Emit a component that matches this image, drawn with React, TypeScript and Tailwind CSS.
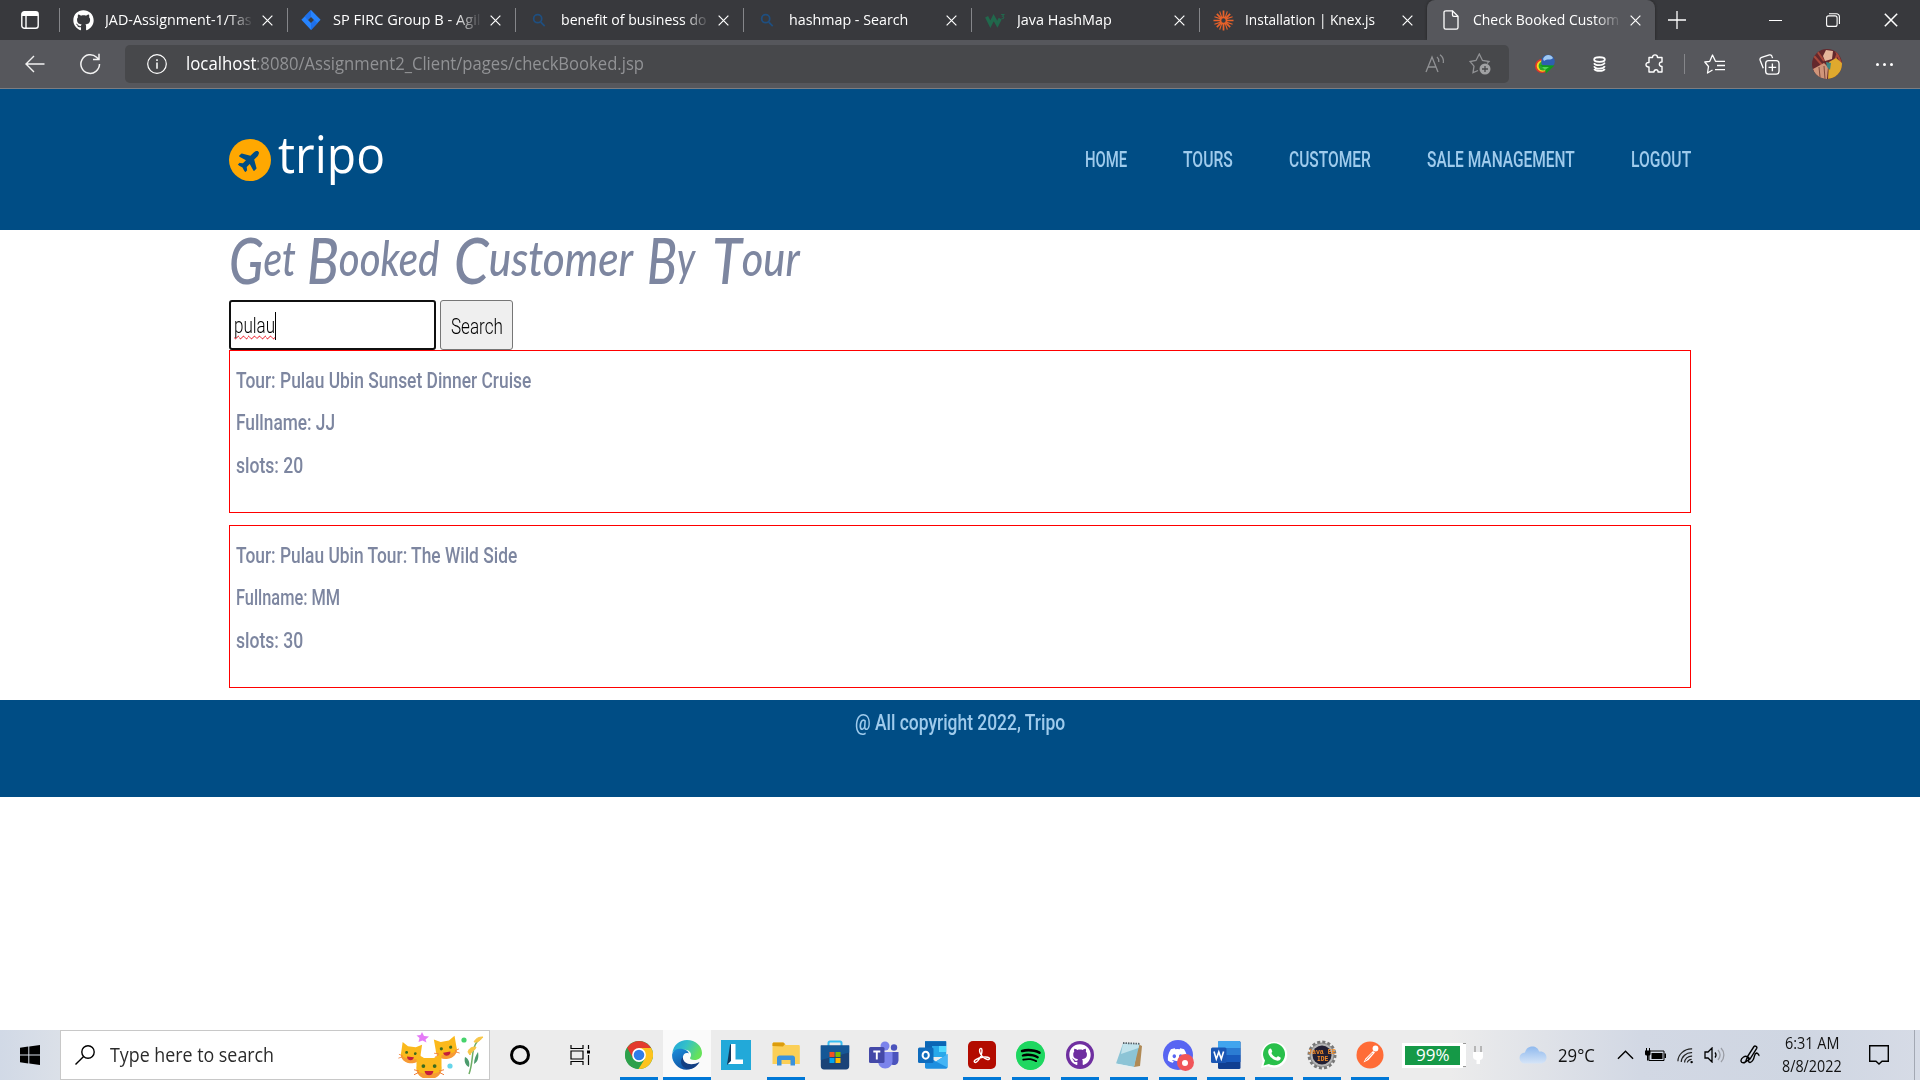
import React, { useLayoutEffect, useRef, useState } from "react";
import { FaGithub, FaSpotify, FaDiscord, FaWhatsapp, FaPlane } from "react-icons/fa";

/** Text squeezed or stretched horizontally to an exact width. */
function Fit({
  w,
  className = "",
  textClassName = "",
  children,
}: {
  w: number;
  className?: string;
  textClassName?: string;
  children: React.ReactNode;
}) {
  const ref = useRef<HTMLSpanElement>(null);
  const [scale, setScale] = useState(1);
  useLayoutEffect(() => {
    if (ref.current) setScale(w / ref.current.offsetWidth);
  }, [w]);
  return (
    <span className={"inline-block shrink-0 " + className} style={{ width: w }}>
      <span
        ref={ref}
        className={"inline-block origin-left whitespace-nowrap " + textClassName}
        style={{ transform: `scaleX(${scale})` }}
      >
        {children}
      </span>
    </span>
  );
}

function CloseIcon({ className = "size-[11px]" }: { className?: string }) {
  return (
    <svg viewBox="0 0 12 12" className={className} fill="none" stroke="currentColor" strokeWidth="1.3">
      <path d="M.7.7l10.6 10.6M11.3.7L.7 11.3" />
    </svg>
  );
}

const SearchFavicon = () => (
  <svg viewBox="0 0 16 16" className="size-[14px]" fill="none" stroke="#1f4f80" strokeWidth="2">
    <circle cx="6.5" cy="6.5" r="4.6" />
    <path d="M10 10.5l4.5 4.5" />
  </svg>
);

const tabs = [
  { title: "JAD-Assignment-1/Tas", w: 147, fade: true, icon: <FaGithub className="size-[21px] text-white" /> },
  {
    title: "SP FIRC Group B - Agil",
    w: 148,
    fade: true,
    icon: (
      <svg viewBox="0 0 20 20" className="size-5">
        <path d="M10 0l9.6 9.8L10 20 .4 9.8z" fill="#2684ff" />
        <path d="M10 0v6.6L6.8 9.9 3.6 6.6zM10 20v-6.7l3.2-3.3 3.2 3.3z" fill="#1f70ea" />
        <path d="M10 7l3 3-3 3-3-3z" fill="#3a3b3f" />
      </svg>
    ),
  },
  { title: "benefit of business do", w: 146, fade: true, icon: <SearchFavicon /> },
  { title: "hashmap - Search", w: 119, icon: <SearchFavicon /> },
  {
    title: "Java HashMap",
    w: 95,
    icon: (
      <svg viewBox="0 0 22 16" className="h-[15px] w-[21px]" fill="none" stroke="#21684c">
        <path d="M1.5 4l4 8 3.500-7 4 7 3-6" strokeWidth="3.6" />
        <path d="M17 1.5h3l-1.500 2c2 0 2 3-1 2.500" strokeWidth="1.1" />
      </svg>
    ),
  },
  {
    title: "Installation | Knex.js",
    w: 130,
    icon: (
      <svg viewBox="0 0 22 22" className="size-[21px]" fill="none" stroke="#e8622a" strokeWidth="1.800">
        <circle cx="11" cy="11" r="3.200" />
        <path d="M11 .5v7M11 14.500v7M.5 11h7M14.500 11h7M4 4l4.500 4.500M13.500 13.500L18 18M18 4l-4.500 4.500M8.500 13.500L4 18" />
        <path d="M7 1.500l2 6M13 14.500l2 6M15 1.500l-2 6M9 14.500l-2 6M1.500 7l6 2M14.500 13l6 2M20.500 7l-6 2M7.500 13l-6 2" strokeWidth="1.200" />
      </svg>
    ),
  },
  {
    title: "Check Booked Custom",
    w: 146,
    fade: true,
    icon: (
      <svg viewBox="0 0 16 20" className="h-5 w-4" fill="none" stroke="#fff" strokeWidth="1.3">
        <path d="M2.500.8h7L15 6.300v11.200a1.700 1.700 0 0 1-1.700 1.700H2.700A1.700 1.700 0 0 1 1 17.500V2.500A1.700 1.700 0 0 1 2.700.8z" />
        <path d="M9.500.8v4.200c0 .8.500 1.300 1.300 1.300H15" />
      </svg>
    ),
  },
];

function TabBar() {
  return (
    <div className="flex h-10 bg-[#38393d] text-white">
      <div className="flex w-[59px] shrink-0 items-center justify-center">
        <svg viewBox="0 0 18 18" className="size-[18px]" fill="none" stroke="#fff" strokeWidth="1.400">
          <rect x=".8" y=".8" width="16.400" height="16.400" rx="2.500" />
          <path d="M1 3h16" strokeWidth="4" />
          <path d="M5 4v13" />
        </svg>
      </div>
      {tabs.map((t, i) => {
        const active = i === 6;
        return (
          <div
            key={t.title}
            className={
              active
                ? "flex h-10 w-[228px] shrink-0 items-center rounded-t-lg bg-[#56575c] shadow-[0_0_3px_#222]"
                : "flex h-10 w-[228px] shrink-0 items-center"
            }
          >
            <span className={active ? "h-6 w-px" : "h-6 w-px bg-[#85868a]"} />
            <span className="ml-[11px] flex w-6 shrink-0 justify-center">{t.icon}</span>
            <span
              className={
                t.fade
                  ? "ml-[10px] flex w-[149px] shrink-0 overflow-hidden pb-[2px] text-[15px] leading-6 [mask-image:linear-gradient(to_right,black_82%,transparent)]"
                  : "ml-[10px] flex w-[149px] shrink-0 overflow-hidden pb-[2px] text-[15px] leading-6"
              }
            >
              <Fit w={t.w}>{t.title}</Fit>
            </span>
            <span className="ml-[8px] flex w-[11px] shrink-0 justify-center">
              <CloseIcon />
            </span>
          </div>
        );
      })}
      <div className="flex w-11 items-center justify-center">
        <svg viewBox="0 0 18 18" className="size-[18px]" stroke="#fff" strokeWidth="1.300">
          <path d="M9 0v18M0 9h18" />
        </svg>
      </div>
      <div className="ml-auto flex">
        <span className="flex w-[57px] items-center justify-center">
          <span className="h-px w-[13px] bg-white" />
        </span>
        <span className="flex w-[58px] items-center justify-center">
          <svg viewBox="0 0 14 14" className="size-[14px]" fill="none" stroke="#fff" strokeWidth="1.100">
            <rect x=".6" y="2.900" width="10.500" height="10.500" rx="2" />
            <path d="M3 .7h7.500a2.900 2.900 0 0 1 2.900 2.900V11" />
          </svg>
        </span>
        <span className="flex w-[58px] items-center justify-center">
          <CloseIcon className="size-[14px]" />
        </span>
      </div>
    </div>
  );
}

function Toolbar() {
  return (
    <div className="flex h-[49px] border-b border-[#7c7d81] bg-[#56575c] pt-[5px] text-white">
      <div className="flex h-[38px] w-[69px] shrink-0 items-center justify-center">
        <svg viewBox="0 0 20 18" className="h-[18px] w-5" fill="none" stroke="#f2f2f2" strokeWidth="1.400">
          <path d="M19.500 9H1M9 1L1 9l8 8" />
        </svg>
      </div>
      <div className="flex h-[38px] w-[56px] shrink-0 items-center pl-[10px]">
        <svg viewBox="0 0 22 22" className="size-[22px]" fill="none" stroke="#f2f2f2" strokeWidth="1.500">
          <path d="M20.500 11A9.300 9.300 0 1 1 17.600 4.300l2 2M20 .8v5.700h-6" />
        </svg>
      </div>
      <div className="flex h-[38px] w-[1384px] shrink-0 items-center rounded-[5px] bg-[#47484b] pl-[22px]">
        <svg viewBox="0 0 20 20" className="size-5" fill="none" stroke="#fff" strokeWidth="1.200">
          <circle cx="10" cy="10" r="9.300" />
          <path d="M10 8.500v6.300M10 5.200v1.700" strokeWidth="1.500" />
        </svg>
        <span className="ml-[19px] flex pb-[2px] text-[18px] leading-6">
          <Fit w={70}>localhost</Fit>
          <Fit w={388} className="text-[#919295]">
            :8080/Assignment2_Client/pages/checkBooked.jsp
          </Fit>
        </span>
        <svg viewBox="0 0 20 20" className="ml-auto size-5" fill="none" stroke="#919295" strokeWidth="1.300">
          <path d="M1 18L7 3l6 15M3 13h8M12 3c1.500 1.200 2 3 1.800 5M15 .8c2.800 2 3.800 5 3.300 8.200" />
        </svg>
        <svg viewBox="0 0 22 22" className="mr-[18px] ml-[24px] size-[22px]" fill="none" stroke="#919295" strokeWidth="1.300">
          <path d="M9 17.500l-5 2.200 1-6.500L1 8.500l6-1L10.300 1l3.200 6.500 6.500 1-2 2" />
          <circle cx="16" cy="16" r="5.500" fill="#a0a1a3" stroke="none" />
          <path d="M16 13v6M13 16h6" stroke="#47484b" />
        </svg>
      </div>
      <div className="ml-[8px] flex h-[38px] items-center">
        <span className="flex w-[55px] justify-center">
          <svg viewBox="0 0 20 20" className="size-5">
            <circle cx="7" cy="12" r="7" fill="#e2362a" />
            <circle cx="7.500" cy="12" r="5.800" fill="#f6d71d" />
            <circle cx="8.200" cy="12" r="4.600" fill="#2da52d" />
            <circle cx="13" cy="7.500" r="6.800" fill="#2f5fb0" />
            <path d="M8 5c2-5 8-5 10-1-2 3-6 0-9 3z" fill="#9fc8f2" />
            <path d="M5 11l14.500.5L11 19.500l-1-4z" fill="#129a1c" />
            <path d="M7 13l7 0-4 3z" fill="#4fd354" />
          </svg>
        </span>
        <span className="flex w-[55px] justify-center">
          <svg viewBox="0 0 16 18" className="h-4 w-[15px]" fill="none" stroke="#fff" strokeWidth="2">
            <ellipse cx="8" cy="4" rx="6" ry="2.600" />
            <path d="M2 8c1 3 10 3.500 12-.5M2 11.500c1 3.500 10 4 12 0M2 14.500c2 3 10 3 12 0" />
          </svg>
        </span>
        <span className="flex w-[55px] justify-center">
          <svg viewBox="0 0 20 20" className="size-[20px]" fill="none" stroke="#fff" strokeWidth="1.400">
            <path d="M4 3.500h3.500c0-3.500 5-3.500 5 0H17V8c-3.500-.4-3.500 4.800 0 4.500V18h-4c.4-3-4-3-4 0H4v-5c-4 .4-4-5 0-4.500z" strokeLinejoin="round" />
          </svg>
        </span>
        <span className="mx-[2px] h-5 w-px bg-[#85868a]" />
        <span className="flex w-[55px] justify-center">
          <svg viewBox="0 0 22 20" className="h-5 w-[22px]" fill="none" stroke="#fff" strokeWidth="1.300" strokeLinejoin="round">
            <path d="M12 7.300h-.5L8.500 1 5.800 7.300l-5 .7 3.700 4.500-1 6.500 5-3M12 7.300h9M13 11.500h8M11 15.700h10" />
          </svg>
        </span>
        <span className="flex w-[55px] justify-center">
          <svg viewBox="0 0 22 22" className="size-[21px]" fill="none" stroke="#fff" strokeWidth="1.400">
            <rect x="7" y="7" width="14" height="14" rx="3" />
            <path d="M14 10v8M10 14h8M4.500 15L1.200 6.500C.7 5 1.500 4 2.800 3.500l8-2.500c1.300-.4 2.400.2 2.800 1.500l.6 1.800" />
          </svg>
        </span>
        <span className="flex w-[60px] justify-center">
          <svg viewBox="0 0 30 30" className="size-[30px] rounded-full">
            <rect width="30" height="30" fill="#64282c" />
            <path d="M2 7l8 9M5 2l7 10M24 2l5 12M27 1l-4 10" stroke="#a8483a" strokeWidth="2" />
            <path d="M14 1l7 1-1 8-7 2-2-5z" fill="#e5b59a" />
            <path d="M17 13l7-4 6 5v16H16z" fill="#dfa92e" />
            <path d="M1 20l11-6 4 4-1 12H5z" fill="#d0957a" />
            <path d="M14 13l5 1-1 7-3-3z" fill="#3d8583" />
            <path d="M12 17l1 13M7 18l1 10" stroke="#7d4a3c" strokeWidth="1" />
          </svg>
        </span>
        <span className="flex w-[54px] justify-center gap-1">
          <span className="size-[3px] rounded-full bg-white" />
          <span className="size-[3px] rounded-full bg-white" />
          <span className="size-[3px] rounded-full bg-white" />
        </span>
      </div>
    </div>
  );
}

const nav: [string, number][] = [
  ["HOME", 42],
  ["TOURS", 50],
  ["CUSTOMER", 82],
  ["SALE MANAGEMENT", 148],
  ["LOGOUT", 60],
];

function Header() {
  return (
    <header className="flex h-[141px] items-center bg-[#004d85] px-[229px]">
      <span className="flex size-[42px] items-center justify-center rounded-full bg-[#ffa801]">
        <FaPlane className="size-[24px] -rotate-45 text-[#004d85]" />
      </span>
      <Fit w={107} className="-mt-[13px] ml-[7px] font-['Open_Sans'] text-[52px] leading-[60px] font-medium text-white">
        tripo
      </Fit>
      <nav className="mt-px ml-auto flex gap-[56px] font-[Roboto] text-[22px] leading-7 font-medium text-[#9fcbec]">
        {nav.map(([label, w]) => (
          <Fit key={label} w={w}>
            {label}
          </Fit>
        ))}
      </nav>
    </header>
  );
}

const headingWords: { word: string; w: number; gap: string }[] = [
  { word: "Get", w: 67, gap: "" },
  { word: "Booked", w: 132, gap: "ml-[11px]" },
  { word: "Customer", w: 179, gap: "ml-[15px]" },
  { word: "By", w: 48, gap: "ml-[14px]" },
  { word: "Tour", w: 88, gap: "ml-[17px]" },
];

const bookings: { rows: [string, number][] }[] = [
  { rows: [["Tour: Pulau Ubin Sunset Dinner Cruise", 295], ["Fullname: JJ", 99], ["slots: 20", 67]] },
  { rows: [["Tour: Pulau Ubin Tour: The Wild Side", 281], ["Fullname: MM", 104], ["slots: 30", 67]] },
];

function Main() {
  return (
    <main className="flex h-[470px] flex-col bg-white px-[229px] text-[#7d86a0]">
      <h1 className="flex h-[70px] font-[Lato] text-[48px] leading-[56px] font-medium italic">
        {headingWords.map(({ word, w, gap }) => (
          <React.Fragment key={word}>
            <Fit
              w={w}
              className={gap}
              textClassName="first-letter:align-[-8px] first-letter:text-[63px] first-letter:leading-[40px]"
            >
              {word}
            </Fit>{" "}
          </React.Fragment>
        ))}
      </h1>
      <div className="relative z-10 flex h-[50px] gap-1 font-[Roboto] text-[22px] leading-7 font-light text-black">
        <div className="flex w-[207px] items-center rounded-[3px] border-2 border-[#101010] bg-white pl-[3px]">
          <span className="mt-[2px] flex h-7 items-center border-r border-black">
            <Fit
              w={41}
              textClassName="underline decoration-red-600 decoration-wavy decoration-1 underline-offset-2 [text-decoration-skip-ink:none]"
            >
              pulau
            </Fit>
          </span>
        </div>
        <button className="flex w-[73px] items-center justify-center rounded-[3px] border border-[#767676] bg-[#efefef] pt-[4px]">
          <Fit w={52}>Search</Fit>
        </button>
      </div>
      {bookings.map((b, i) => (
        <section
          key={i}
          className="mb-3 h-[163px] shrink-0 border border-[#f00] pt-[9px] pl-[6px] font-[Roboto] text-[22px] leading-[42.300px] font-medium"
        >
          {b.rows.map(([text, w]) => (
            <p key={text} className="flex h-[42.300px]">
              <Fit w={w}>{text}</Fit>
            </p>
          ))}
        </section>
      ))}
    </main>
  );
}

/* ---------- taskbar ---------- */

const ChromeIcon = () => (
  <svg viewBox="0 0 28 28" className="size-7">
    <circle cx="14" cy="14" r="14" fill="#2da04b" />
    <path d="M14 14L1.900 7A14 14 0 0 1 26.100 7z" fill="#e33b2e" />
    <path d="M14 7h12.100A14 14 0 0 1 13.500 28l6.500-10.500z" fill="#fcc31e" />
    <path d="M1.900 7L8 17.500 14 8z" fill="#e33b2e" />
    <path d="M2.100 6.800L8 17.500 13.500 28A14 14 0 0 1 2.100 6.800z" fill="#2da04b" />
    <circle cx="14" cy="14" r="6.900" fill="#fff" />
    <circle cx="14" cy="14" r="5.300" fill="#2f7de9" />
  </svg>
);

const EdgeIcon = () => (
  <svg viewBox="0 0 30 30" className="size-[30px]">
    <defs>
      <linearGradient id="edgeTop" x1="0" y1="0" x2="1" y2=".4">
        <stop offset="0" stopColor="#1fa4de" />
        <stop offset=".5" stopColor="#35c1c7" />
        <stop offset="1" stopColor="#66e25a" />
      </linearGradient>
      <linearGradient id="edgeLow" x1="0" y1="0" x2=".6" y2="1">
        <stop offset="0" stopColor="#1b8fdc" />
        <stop offset="1" stopColor="#0f4f9f" />
      </linearGradient>
    </defs>
    <path d="M.3 13C1.500 5 7.500 0 15 0c8.500 0 15 6 15 13 0 4.500-3.500 7-7.500 7-3.500 0-5-1.300-4.300-2.500 2.300-3.500-.2-7.500-5.200-7.800C7 9.400 2 10 .3 13z" fill="url(#edgeTop)" />
    <path d="M.2 14C2 9 7 8.500 10.500 9c4 .6 6 2.500 6.300 4.500-3-1.500-6 .5-6 4.500 0 6 6 10 13 7.500C19 31.500 9 31 4 25 1 21.500-.3 18 .2 14z" fill="url(#edgeLow)" />
    <path d="M10.800 17c0 6.500 8 9.500 16.700 5-4 7.500-11.500 8.500-16 5-3.300-2.500-3-7.500-.7-10z" fill="#123f83" />
  </svg>
);

const LIcon = () => (
  <svg viewBox="0 0 30 30" className="size-[30px]">
    <rect width="30" height="30" fill="#22a9d9" />
    <path d="M10 4v17l-4 4 3-20z" fill="#12395c" />
    <path d="M10 4h4.500v15.500H22V24H7l3-3z" fill="#fff" />
  </svg>
);

const FolderIcon = () => (
  <svg viewBox="0 0 28 26" className="h-[26px] w-7">
    <path d="M.5 2C.5 1 1 .5 2 .5h9L14 3h12.500c.8 0 1.300.5 1.300 1.200V22H.5z" fill="#fbcf57" />
    <path d="M.5 4V2C.5 1 1 .5 2 .5h9.500L13 2l-2 2.500z" fill="#dc9c0c" />
    <path d="M5 23.500V16c0-1.500 1-2.500 2.500-2.500h13c1.500 0 2.500 1 2.500 2.500v7.500h-4.500V18h-9v5.500z" fill="#3a92dd" />
  </svg>
);

const StoreIcon = () => (
  <svg viewBox="0 0 30 30" className="size-[30px]">
    <path d="M8.500 7V3c0-1 .5-1.500 1.500-1.500h10c1 0 1.500.5 1.500 1.500v4" fill="none" stroke="#37bdf2" strokeWidth="2" />
    <path d="M.8 5.500h28.400V26c0 2-1.200 3.500-3.200 3.500H4C2 29.500.8 28 .8 26z" fill="#1a4378" />
    <path d="M.8 5.500h28.400v7L.8 20z" fill="#155796" />
    <path d="M9.500 12h5v5h-5z" fill="#f25022" />
    <path d="M15.500 12h5v5h-5z" fill="#7fba00" />
    <path d="M9.500 18h5v5h-5z" fill="#00a4ef" />
    <path d="M15.500 18h5v5h-5z" fill="#ffb900" />
  </svg>
);

const TeamsIcon = () => (
  <svg viewBox="0 0 30 28" className="h-7 w-[30px]">
    <circle cx="25" cy="6.500" r="3.200" fill="#4b53bc" />
    <circle cx="16" cy="5" r="4.500" fill="#7b83eb" />
    <path d="M20 11h9.500v8c0 3-2 5-4.500 5s-5-1-5-5z" fill="#4b53bc" />
    <path d="M9 11h14.500v9c0 4-3 7.500-7.300 7.500S9 24 9 20z" fill="#7b83eb" />
    <rect y="6" width="15.500" height="16" rx="1.500" fill="#4449a8" />
    <path d="M4.300 10.500h7M7.800 10.500v8" stroke="#fff" strokeWidth="1.900" />
  </svg>
);

const OutlookIcon = () => (
  <svg viewBox="0 0 30 28" className="h-7 w-[30px]">
    <path d="M7 1.500C7 .7 7.500.2 8.300.2H27c.7 0 1.200.5 1.200 1.300V16H7z" fill="#28a8ea" />
    <path d="M7 5h7v6H7z" fill="#0f64b0" />
    <path d="M21 5h7.200v6H21z" fill="#50d9ff" />
    <path d="M7 .2h21.200V5H7z" fill="#0a66b5" />
    <path d="M7 14l11 6.500L29.500 13v13c0 1-.6 1.700-1.700 1.700H8.500C7.500 27.700 7 27 7 26z" fill="#1e8fe0" />
    <path d="M29.500 13v13.500L18 20.500z" fill="#43b4f5" />
    <rect y="6.500" width="15.500" height="15.500" rx="1.500" fill="#0f6cbd" />
    <ellipse cx="7.700" cy="14.200" rx="3.100" ry="3.500" fill="none" stroke="#fff" strokeWidth="2" />
  </svg>
);

const AcrobatIcon = () => (
  <svg viewBox="0 0 28 28" className="size-7 rounded-[5px]">
    <rect width="28" height="28" fill="#b30b00" />
    <path d="M6.500 21c-1.500-1.500 3.500-4 8-4.700s7 .2 7 1.500c-.5 1.600-4.500.3-7-2.200-2-2.200-3.300-5-2.800-7.200.5-1.500 2.300-1.500 2.300 1 0 3-2.200 8-4.200 10.500-1.300 1.500-2.500 2-3.300 1.100z" fill="none" stroke="#fff" strokeWidth="1.400" />
  </svg>
);

const SpotifyIcon = () => (
  <span className="flex size-[29px] items-center justify-center rounded-full bg-[radial-gradient(#000_60%,#1ed760_61%)]">
    <FaSpotify className="size-[29px] text-[#1ed760]" />
  </span>
);

const GithubDesktopIcon = () => (
  <span className="flex size-7 items-center justify-center rounded-full bg-[#6f2fa0]">
    <FaGithub className="size-[22px] text-white" />
  </span>
);

const NotepadIcon = () => (
  <svg viewBox="0 0 28 28" className="size-7">
    <path d="M23 3l4 2-2 20-6 1z" fill="#b08a55" />
    <path d="M8 2.500L24.500 3 19 26 1 22.500z" fill="#8cc4d6" />
    <path d="M8 2.500L24.500 3l-1 4L6 13z" fill="#c2e3ec" />
    <path d="M8 2l17 .8" stroke="#59646b" strokeWidth="1.800" strokeDasharray="1.500 1" />
    <path d="M1 22.500L19 26v1.500L1 24z" fill="#e4eff2" />
  </svg>
);

const DiscordIcon = () => (
  <span className="relative flex size-[30px] items-center justify-center rounded-full bg-[#5865f2]">
    <FaDiscord className="size-[21px] text-white" />
    <span className="absolute -right-px -bottom-px flex size-[17px] items-center justify-center rounded-full bg-[#f0555a]">
      <span className="size-[6px] rounded-full bg-white" />
    </span>
  </span>
);

const WordIcon = () => (
  <svg viewBox="0 0 30 28" className="h-7 w-[30px]">
    <rect x="7" width="22.500" height="28" rx="1.500" fill="#103f91" />
    <path d="M7 1.500C7 .6 7.600 0 8.500 0H28c.9 0 1.500.6 1.500 1.500V7H7z" fill="#41a5ee" />
    <path d="M7 7h22.500v7H7z" fill="#2b7cd3" />
    <path d="M7 14h22.500v7H7z" fill="#185abd" />
    <rect y="6.500" width="15.500" height="15.500" rx="1.500" fill="#1a56b4" />
    <path d="M3 10.500l2.300 7.500 2.500-7 2.500 7 2.300-7.500" fill="none" stroke="#fff" strokeWidth="1.600" />
  </svg>
);

const WhatsappIcon = () => (
  <span className="flex size-7 items-center justify-center">
    <svg viewBox="0 0 28 28" className="size-7">
      <path d="M1 27l1.800-7A13 13 0 1 1 8 25.200z" fill="#fff" />
      <path d="M3.500 24.500l1.500-5A11 11 0 1 1 9 23z" fill="#29c04b" />
      <path d="M9.200 8c1-1 2-.5 2.200.2l.8 2c.2.700-.8 1.400-.8 1.800.8 2 2.800 3.800 4.800 4.500.6.100 1.300-1.500 2-1.200l2.300 1.200c.5.300.2 2-1 2.800-3 1.800-10-2-11.200-7.500-.3-1.500.1-3 .9-3.800z" fill="#fff" />
    </svg>
  </span>
);

const EclipseIcon = () => (
  <span className="relative flex size-[30px] items-center justify-center">
    <svg viewBox="0 0 30 30" className="size-[30px]">
      <circle cx="15" cy="15" r="13" fill="none" stroke="#777" strokeWidth="3" strokeDasharray="3 2.100" />
      <circle cx="15" cy="15" r="12" fill="#b5b5b5" stroke="#777" strokeWidth=".8" />
      <circle cx="15" cy="15" r="9.500" fill="#221f33" />
    </svg>
    <span className="absolute inset-0 flex flex-col items-center justify-center font-['Liberation_Mono'] text-[8px] leading-[7px] font-bold text-[#f08a28]">
      <Fit w={28}>Java EE</Fit>
      <Fit w={11}>IDE</Fit>
    </span>
  </span>
);

const PostmanIcon = () => (
  <svg viewBox="0 0 28 28" className="size-7">
    <circle cx="14" cy="14" r="13.500" fill="#ff6c37" />
    <circle cx="19.500" cy="7.500" r="2.900" fill="#fff" />
    <path d="M17 10l2 1.500-6.500 7.500-5 2.500 2-4z" fill="#fff" />
    <path d="M16.500 12l-7 7.500" stroke="#ff6c37" strokeWidth=".8" />
  </svg>
);

const apps: { id: string; icon: React.ReactNode; line: boolean; active?: boolean }[] = [
  { id: "chrome", icon: <ChromeIcon />, line: true },
  { id: "edge", icon: <EdgeIcon />, line: true, active: true },
  { id: "l", icon: <LIcon />, line: false },
  { id: "explorer", icon: <FolderIcon />, line: true },
  { id: "store", icon: <StoreIcon />, line: false },
  { id: "teams", icon: <TeamsIcon />, line: false },
  { id: "outlook", icon: <OutlookIcon />, line: false },
  { id: "acrobat", icon: <AcrobatIcon />, line: true },
  { id: "spotify", icon: <SpotifyIcon />, line: true },
  { id: "github", icon: <GithubDesktopIcon />, line: true },
  { id: "notepad", icon: <NotepadIcon />, line: true },
  { id: "discord", icon: <DiscordIcon />, line: true },
  { id: "word", icon: <WordIcon />, line: true },
  { id: "whatsapp", icon: <WhatsappIcon />, line: true },
  { id: "eclipse", icon: <EclipseIcon />, line: true },
  { id: "postman", icon: <PostmanIcon />, line: true },
];

function Cat({ x, y, s, r }: { x: number; y: number; s: number; r: number }) {
  return (
    <g transform={`translate(${x} ${y}) rotate(${r}) scale(${s})`}>
      <path d="M-10 0l0-10 6 3.500h8l6-3.500v10c1 6-4 10-10 10S-11 6-10 0z" fill="#fbb91c" />
      <path d="M-10 4c2 5 6 6.500 10 6.500s8-1.500 10-6.500c-5 3-15 3-20 0z" fill="#f79a35" />
      <circle cx="-4.500" cy="0" r="1.500" fill="#3b6b1d" />
      <circle cx="4.500" cy="0" r="1.500" fill="#3b6b1d" />
      <path d="M-3.500 4h7c0 4.500-7 4.500-7 0z" fill="#c41e3a" />
      <path d="M-12 3l4 1M-12 7l4-2M12 3l-4 1M12 7l-4-2" stroke="#f0803a" strokeWidth=".8" />
    </g>
  );
}

const CatsArt = () => (
  <svg viewBox="0 0 90 46" className="h-[46px] w-[90px]">
    <Cat x={17} y={21} s={0.98} r={8} />
    <Cat x={52} y={16} s={1.05} r={-10} />
    <Cat x={35} y={34} s={1.25} r={0} />
    <path d="M28 0l2 4 5 .5-3.500 3 1 3-4-2-4 1.500 1-4-3-2.500 4-.5z" fill="#e57bf7" />
    <circle cx="70" cy="8" r="2.600" fill="#45d36b" />
    <circle cx="56" cy="34" r="2.600" fill="#66d5ea" />
    <path d="M75 42c3-8 3-16 4-22 1-6 3-10 7-14" fill="none" stroke="#6fae66" strokeWidth="1.500" />
    <path d="M75 35c-4-2-5-6-4-10 4 2 5 6 4 10zM80 32c0-5 2-9 4-12 1 5 0 10-4 12z" fill="#4c9b6d" />
    <path d="M80 10c2-4 5-5 9-5-2 2-3 4-6 5zM74 20c1-4 4-5 8-5-1 4-4 3-6 8z" fill="#f8c646" stroke="#f8c646" />
  </svg>
);

function Tray() {
  return (
    <div className="ml-auto flex h-full items-center text-[#111]">
      <span className="flex h-[25px] w-[61px] items-center border-[3px] border-white bg-[#159947] pl-[11px] text-[17px] leading-5 text-white">
        <Fit w={34}>99%</Fit>
      </span>
      <span className="h-6 w-[3px] border-y border-[#999] bg-white" />
      <svg viewBox="0 0 12 20" className="ml-[6px] h-5 w-3">
        <path d="M1 7h10v5c0 2-2 3-3 3v4H4.500v-4C3 15 1 14 1 12z" fill="#fff" />
        <path d="M3 1v6M9 1v6" stroke="#a5a5a5" strokeWidth="1.500" />
      </svg>
      <svg viewBox="0 0 28 18" className="ml-[35px] h-[18px] w-7">
        <defs>
          <linearGradient id="cloud" x1="0" y1="0" x2="0" y2="1">
            <stop offset="0" stopColor="#8fb9ee" />
            <stop offset="1" stopColor="#d5e4f7" />
          </linearGradient>
        </defs>
        <path d="M6 17.500a5.500 5.500 0 0 1 0-11C7 2 10.500.5 13.500.5s6 2 6.500 5c4.500-.6 7.500 2.300 7.500 6s-3 6-6 6z" fill="url(#cloud)" />
      </svg>
      <Fit w={37} className="ml-[11px] text-[19px] leading-6">29°C</Fit>
      <svg viewBox="0 0 18 10" className="ml-[22px] h-[10px] w-[17px]" fill="none" stroke="#000" strokeWidth="1.500">
        <path d="M1 9l8-8 8 8" />
      </svg>
      <svg viewBox="0 0 21 14" className="ml-[11px] h-[14px] w-[21px]">
        <path d="M4 3h15v9.500H4z" fill="none" stroke="#000" strokeWidth="1" />
        <path d="M6.500 5h11v6h-11zM19.500 5.500H21V10h-1.500z" />
        <path d="M0 2.500h5.500V6c0 1-1 1.500-2 1.500v5h-1.500v-5C1 7.500 0 7 0 6zM1 0h1v3H1zM4 0h1v3H4z" />
      </svg>
      <svg viewBox="0 0 18 18" className="ml-[11px] size-[17px]" fill="none" stroke="#222" strokeWidth="1.300">
        <path d="M1 15C1 8 8 1.500 16 2M4.500 16C4.500 10.500 10 5.500 16 6M8 16.500c0-4 3.500-7 8-6.800M11 16.500c0-1.500 2-3.300 4.500-3.300" />
        <circle cx="15.500" cy="16" r="1.300" fill="#000" stroke="none" />
      </svg>
      <svg viewBox="0 0 21 16" className="ml-[10px] h-4 w-[21px]" fill="none" stroke="#000" strokeWidth="1.300">
        <path d="M1 5h3l4-4v14l-4-4H1zM11 5.500c1.200 1.500 1.200 3.500 0 5" />
        <path d="M14 3c2.500 3 2.500 7 0 10M17 1c3.800 4 3.800 10 0 14" stroke="#9a9da5" />
      </svg>
      <svg viewBox="0 0 20 20" className="ml-[15px] size-5" fill="none" stroke="#000" strokeWidth="1.400">
        <path d="M5.500 17l2-5.500L14 1.500c1-1.300 3.500.2 2.700 1.800L10 14zM7.500 11.500L10 14M5.500 17c-5 2.500-6-2.500-2-5 2.500-1.500 5.500-.5 5 3-.2 3 2.500 3.500 4.500 0s1-6.500 3.500-7c2 0 2 2.500 3 2.500" />
      </svg>
      <div className="ml-[20px] flex w-16 flex-col items-center text-[15.500px] leading-[23px]">
        <Fit w={54}>6:31 AM</Fit>
        <Fit w={60}>8/8/2022</Fit>
      </div>
      <svg viewBox="0 0 20 20" className="ml-[25px] size-5" fill="none" stroke="#000" strokeWidth="1.400">
        <path d="M.7.700h18.600v15.600H13L10 19l-3-2.700H.7z" />
      </svg>
      <span className="ml-[25px] h-full w-[6px] border-l border-[#a3a8b3]" />
    </div>
  );
}

function Taskbar() {
  return (
    <footer className="flex h-[50px] items-center bg-[linear-gradient(90deg,#d1d9e6_0,#dbe0e8_60px,#ececec_480px,#ececec_1450px,#d2d8e4_1640px,#cfd6e2_1800px,#d6dbe6_1920px)]">
      <div className="flex w-[60px] shrink-0 justify-center">
        <svg viewBox="0 0 20 20" className="size-5">
          <path d="M0 2.800l8.300-1.200v8H0zM9.300 1.400L20 0v9.600H9.300zM0 10.500h8.300v8L0 17.300zM9.300 10.500H20V20L9.300 18.600z" />
        </svg>
      </div>
      <div className="flex h-[50px] w-[430px] shrink-0 items-center border border-[#c8c8c8] bg-white pl-[14px]">
        <svg viewBox="0 0 20 20" className="size-5" fill="none" stroke="#000" strokeWidth="1.400">
          <circle cx="13" cy="7" r="6.200" />
          <path d="M8.600 11.400L.5 19.500" />
        </svg>
        <Fit w={164} className="ml-[15px] text-[20px] leading-7 text-[#2b2b2b]">
          Type here to search
        </Fit>
        <span className="mr-[5px] ml-auto flex">
          <CatsArt />
        </span>
      </div>
      <div className="flex w-[60px] shrink-0 justify-center">
        <span className="size-[20px] rounded-full border-[3px] border-black" />
      </div>
      <div className="flex w-[60px] shrink-0 justify-center">
        <svg viewBox="0 0 21 20" className="h-5 w-[21px]" fill="none" stroke="#000" strokeWidth="1.200">
          <path d="M1 0v3.500h12V0M1 20v-3.500h12V20M1 6h12v8H1zM18.500 0v4M18.500 10v10" />
          <path d="M17 5.500h3v3h-3z" fill="#000" stroke="none" />
        </svg>
      </div>
      <div className="ml-[4px] flex h-[50px] shrink-0">
        {apps.map((a, i) => (
          <div
            key={a.id}
            className={
              a.active
                ? "flex w-[48px] flex-col items-center bg-[#fafafa]"
                : i === 0
                  ? "flex w-[49px] flex-col items-center"
                  : i === 2
                    ? "flex w-[50px] flex-col items-center"
                    : i < 12
                      ? "flex w-[49px] flex-col items-center"
                      : "flex w-[48px] flex-col items-center"
            }
          >
            <span className="flex h-[47px] items-center pt-[3px]">{a.icon}</span>
            {a.line && <span className={a.active ? "h-[3px] w-full bg-[#0078d7]" : "h-[3px] w-[38px] bg-[#0078d7]"} />}
          </div>
        ))}
      </div>
      <Tray />
    </footer>
  );
}

export default function App() {
  return (
    <div className="flex h-[1080px] w-[1920px] flex-col overflow-hidden bg-white font-['Open_Sans',sans-serif]">
      <TabBar />
      <Toolbar />
      <Header />
      <Main />
      <div className="flex h-[97px] justify-center bg-[#004d85] pt-[9px] font-[Roboto] text-[22px] leading-7 font-medium text-[#9fcbec]">
        <Fit w={210}>@ All copyright 2022, Tripo</Fit>
      </div>
      <div className="flex-1 bg-white" />
      <Taskbar />
    </div>
  );
}
